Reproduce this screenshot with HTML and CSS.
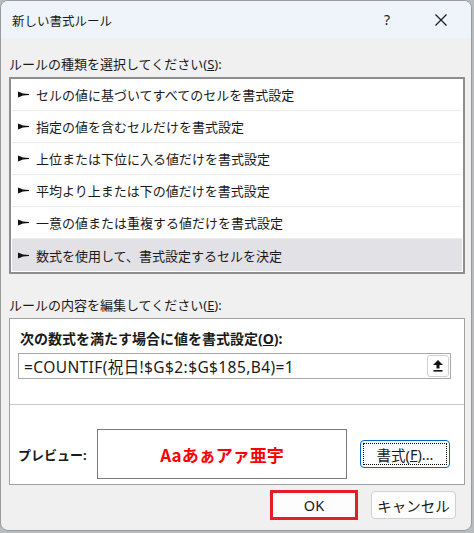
FILE: index.html
```html
<!DOCTYPE html>
<html lang="ja">
<head>
<meta charset="UTF-8" />
<meta name="viewport" content="width=device-width, initial-scale=1.0"/>
<title>新しい書式ルール</title>
<link rel="stylesheet" href="styles.css">
</head>
<body>

<div class="dialog">
    <div class="titlebar">
        <span class="title">新しい書式ルール</span>
        <span class="title-btn help">?</span>
        <span class="title-btn close">
            <svg width="12" height="12" viewBox="0 0 12 12"><path d="M0.5 0.5 L11.5 11.5 M11.5 0.5 L0.5 11.5" stroke="#1a1a1a" stroke-width="1.2" fill="none"/></svg>
        </span>
    </div>

    <div class="content">
        <div class="label first">ルールの種類を選択してください(<u>S</u>):</div>

        <div class="rule-list">
            <div class="rule-item"><svg class="arrow" width="12" height="7" viewBox="0 0 12 7"><polygon points="0,0.5 5,2.6 11,2.9 11,4.1 5,4.4 0,6.5" fill="#111"/></svg>セルの値に基づいてすべてのセルを書式設定</div>
            <div class="rule-item"><svg class="arrow" width="12" height="7" viewBox="0 0 12 7"><polygon points="0,0.5 5,2.6 11,2.9 11,4.1 5,4.4 0,6.5" fill="#111"/></svg>指定の値を含むセルだけを書式設定</div>
            <div class="rule-item"><svg class="arrow" width="12" height="7" viewBox="0 0 12 7"><polygon points="0,0.5 5,2.6 11,2.9 11,4.1 5,4.4 0,6.5" fill="#111"/></svg>上位または下位に入る値だけを書式設定</div>
            <div class="rule-item"><svg class="arrow" width="12" height="7" viewBox="0 0 12 7"><polygon points="0,0.5 5,2.6 11,2.9 11,4.1 5,4.4 0,6.5" fill="#111"/></svg>平均より上または下の値だけを書式設定</div>
            <div class="rule-item"><svg class="arrow" width="12" height="7" viewBox="0 0 12 7"><polygon points="0,0.5 5,2.6 11,2.9 11,4.1 5,4.4 0,6.5" fill="#111"/></svg>一意の値または重複する値だけを書式設定</div>
            <div class="rule-item selected"><svg class="arrow" width="12" height="7" viewBox="0 0 12 7"><polygon points="0,0.5 5,2.6 11,2.9 11,4.1 5,4.4 0,6.5" fill="#111"/></svg>数式を使用して、書式設定するセルを決定</div>
        </div>

        <div class="label second">ルールの内容を編集してください(<u>E</u>):</div>

        <div class="group">
            <div class="group-top">
                <div class="bold-label">次の数式を満たす場合に値を書式設定(<u>O</u>):</div>
                <div class="formula">
                    <span class="formula-text">=COUNTIF(祝日!$G$2:$G$185,B4)=1</span>
                    <span class="collapse-btn">
                        <svg width="10" height="12" viewBox="0 0 10 12"><polygon points="5,0 10,5 6.5,5 6.5,8.5 3.5,8.5 3.5,5 0,5" fill="#111"/><rect x="0.5" y="10" width="9" height="1.6" fill="#111"/></svg>
                    </span>
                </div>
            </div>
            <div class="preview-row">
                <span class="preview-label">プレビュー:</span>
                <div class="preview-box">Aaあぁアァ亜宇</div>
                <button class="btn format-btn"><span class="focus-ring">書式(<u>F</u>)...</span></button>
            </div>
        </div>

        <div class="buttons">
            <button class="btn ok-btn">OK</button>
            <button class="btn cancel-btn">キャンセル</button>
        </div>
    </div>
</div>

</body>
</html>
```

FILE: styles.css
```css
body {
    margin: 0;
    background: #b9bcbf;
    font-family: "Noto Sans", "Noto Sans CJK JP", sans-serif;
    color: #1a1a1a;
}

.dialog {
    width: 470px;
    height: 529px;
    background: #f0f0f0;
    border: 1px solid #9a9a9a;
    border-radius: 8px;
    overflow: hidden;
}

.titlebar {
    height: 37px;
    background: #eef4f9;
    display: flex;
    align-items: center;
    padding-left: 11px;
}

.title {
    font-family: "Noto Sans CJK JP", sans-serif;
    font-size: 12.5px;
    flex: 1;
    margin-top: 2px;
}

.title-btn {
    width: 58px;
    display: flex;
    justify-content: center;
    align-items: center;
}

.help {
    font-size: 14px;
    margin-right: -4px;
}

.close {
    margin-right: 1px;
}

.content {
    padding: 0 6px 0 8px;
}

.label {
    height: 20px;
    line-height: 20px;
    font-size: 13px;
}

.label.first {
    margin-top: 16px;
}

.label.second {
    margin-top: 21px;
}

.rule-list {
    margin-top: 3px;
    border: 2px solid #8e8e8e;
    background: #fff;
    padding: 0 1px 1px 1px;
}

.rule-item {
    height: 32px;
    box-sizing: border-box;
    border-bottom: 1px solid #ececec;
    display: flex;
    align-items: center;
    font-size: 13px;
    padding-left: 6px;
}

.rule-item:last-child {
    border-bottom: none;
}

.rule-item.selected {
    background: #e2e1e6;
}

.arrow {
    margin-right: 6px;
}

.group {
    margin-top: 3px;
    border: 1px solid #a0a0a0;
    background: #fff;
}

.group-top {
    padding: 10px 13px 0 8px;
    border-bottom: 1px solid #c8c8c8;
    height: 75px;
}

.bold-label {
    font-weight: bold;
    font-size: 14px;
    height: 20px;
    line-height: 20px;
    padding-left: 2px;
}

.formula {
    margin-top: 4px;
    height: 26px;
    box-sizing: border-box;
    border: 1px solid #a8a8a8;
    display: flex;
    align-items: center;
    padding: 0 1px 0 5px;
}

.formula-text {
    flex: 1;
    font-size: 15.5px;
    letter-spacing: 0.4px;
}

.collapse-btn {
    width: 22px;
    height: 22px;
    box-sizing: border-box;
    border: 1px solid #d0d0d0;
    border-radius: 3px;
    display: flex;
    justify-content: center;
    align-items: center;
}

.preview-row {
    display: flex;
    align-items: center;
    padding: 24px 0 5px 8px;
}

.preview-label {
    font-weight: bold;
    font-size: 13px;
    width: 79px;
}

.preview-box {
    width: 250px;
    height: 50px;
    box-sizing: border-box;
    border: 1px solid #7a7a7a;
    display: flex;
    justify-content: center;
    align-items: center;
    color: #ff0000;
    font-weight: bold;
    font-size: 17px;
    font-family: "Noto Sans CJK JP", sans-serif;
}

.btn {
    font-family: "Noto Sans", "Noto Sans CJK JP", sans-serif;
    font-size: 14.5px;
    color: #1a1a1a;
    background: #fdfdfd;
    border: 1px solid #d0d0d0;
    border-radius: 4px;
    padding: 0;
}

.format-btn {
    margin-left: 13px;
    width: 90px;
    height: 28px;
    border: 1px solid #0067c0;
    padding: 2px;
}

.focus-ring {
    display: flex;
    justify-content: center;
    align-items: center;
    height: 100%;
    box-sizing: border-box;
    border: 1px dotted #000;
}

.buttons {
    display: flex;
    justify-content: flex-end;
    align-items: center;
    margin-top: 5px;
    padding-right: 9px;
    gap: 13px;
}

.ok-btn {
    width: 88px;
    height: 30px;
    border: 3px solid #e41e26;
    border-radius: 0;
}

.cancel-btn {
    width: 85px;
    height: 28px;
}
```
